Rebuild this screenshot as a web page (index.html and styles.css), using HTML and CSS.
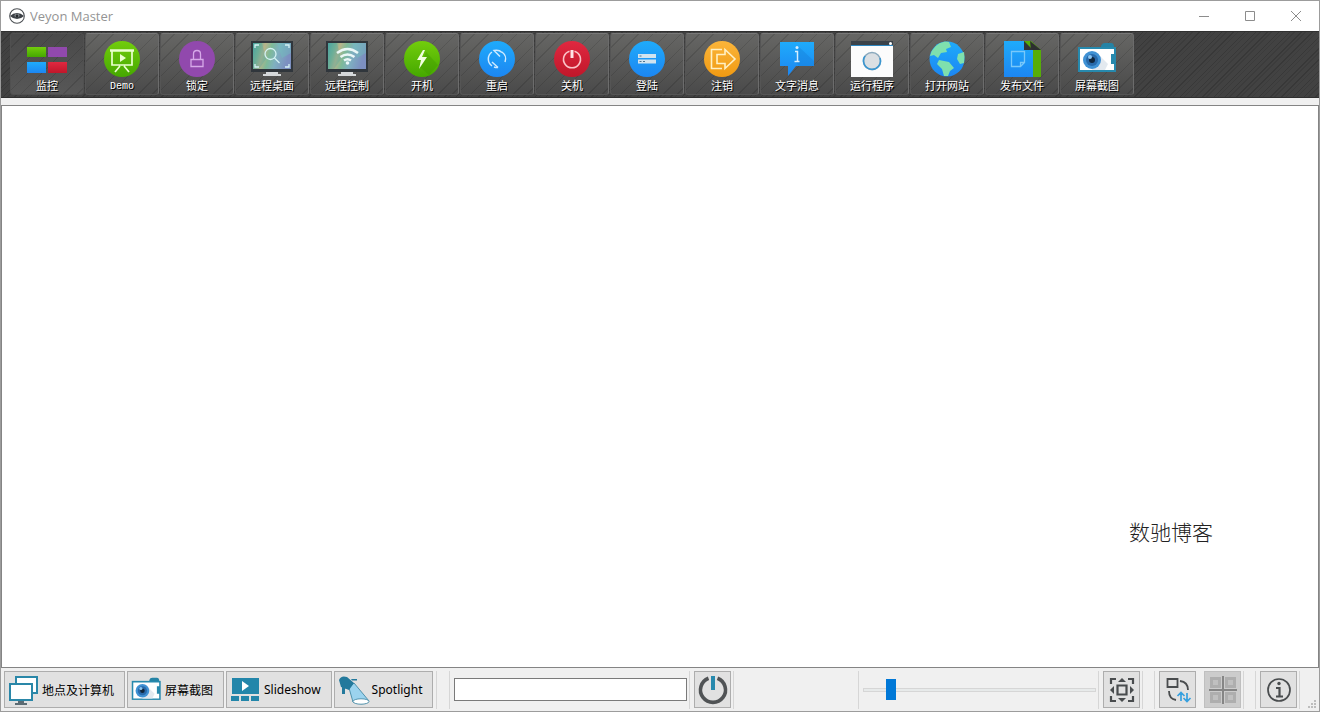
FILE: index.html
```html
<!DOCTYPE html>
<html lang="zh-CN">
<head>
  <meta charset="UTF-8">
  <meta name="viewport" content="width=device-width, initial-scale=1.0">
  <title>Veyon Master</title>
  <link rel="stylesheet" href="styles.css">
</head>
<body>
  <svg class="defs" width="0" height="0" aria-hidden="true">
    <defs>
      <linearGradient id="green" x1="0" y1="0" x2="0" y2="1"><stop offset="0" stop-color="#72cd0c"/><stop offset="1" stop-color="#45a800"/></linearGradient>
      <linearGradient id="blue" x1="0" y1="0" x2="0" y2="1"><stop offset="0" stop-color="#1fabfb"/><stop offset="1" stop-color="#1c86f2"/></linearGradient>
      <linearGradient id="red" x1="0" y1="0" x2="0" y2="1"><stop offset="0" stop-color="#e02840"/><stop offset="1" stop-color="#c0172a"/></linearGradient>
      <linearGradient id="orange" x1="0" y1="0" x2="0" y2="1"><stop offset="0" stop-color="#fbb53a"/><stop offset="1" stop-color="#f09a12"/></linearGradient>
      <linearGradient id="wallpaper" x1="0" y1="0" x2="1" y2="0.2"><stop offset="0" stop-color="#4aa3a0"/><stop offset=".2" stop-color="#7fb391"/><stop offset=".32" stop-color="#b9b48a"/><stop offset=".5" stop-color="#7dba98"/><stop offset=".7" stop-color="#7fb0c0"/><stop offset="1" stop-color="#7c8fc0"/></linearGradient>
      <symbol id="monitor" viewBox="0 0 42 40">
        <rect y="2" width="42" height="31" fill="#30363c"/>
        <rect x="2" y="4" width="38" height="26" fill="url(#wallpaper)"/>
        <path d="M2 4h9l4 16-7 10H2z" fill="#4aa5a4" opacity=".35"/>
        <path d="M26 4h14v10l-9 5z" fill="#6fc2bc" opacity=".4"/>
        <path d="M15 33h12v2h3v2H12v-2h3z" fill="#d5d8da"/>
      </symbol>
      <symbol id="camera" viewBox="0 0 40 40">
        <path d="M24 7q1-3 4-3h6q3 0 3 4v2H24z" fill="#2583a5"/>
        <rect x="1" y="8" width="38" height="25" fill="#2789ad"/>
        <path d="M3 10h34v5h-3v10h3v6H3z" fill="#fff"/>
        <path d="M19 13l12 12-3 6H15z" fill="#e3e9ef"/>
        <circle cx="15" cy="21" r="9" fill="#3f91d4"/>
        <circle cx="15" cy="21" r="6" fill="#2869aa"/>
        <circle cx="15" cy="21" r="3" fill="#10263c"/>
        <circle cx="13" cy="18" r="2" fill="#8cc5ef"/>
      </symbol>
    </defs>
  </svg>

  <div class="window">
    <header class="titlebar">
      <svg class="app-logo" viewBox="0 0 16 16" aria-hidden="true"><circle cx="8" cy="8" r="7.3" fill="#fff" stroke="#4c5054" stroke-width="1.1"/><path d="M1 8q3-3 7-3t7 3q-3 3-7 3T1 8z" fill="#3d4247"/><ellipse cx="8" cy="7.5" rx="2.6" ry="1.7" fill="#8b9095"/><circle cx="8" cy="8" r="1.4" fill="#25292c"/></svg>
      <h1>Veyon Master</h1>
      <div class="window-controls">
        <button type="button" aria-label="最小化"><svg viewBox="0 0 12 12"><path d="M1 6.500h10"/></svg></button>
        <button type="button" aria-label="最大化"><svg viewBox="0 0 12 12"><path d="M1.500 1.500h9v9h-9z"/></svg></button>
        <button type="button" aria-label="关闭"><svg viewBox="0 0 12 12"><path d="M1 1l10 10M11 1L1 11"/></svg></button>
      </div>
    </header>

    <nav class="toolbar">
      <button type="button" class="tool active">
        <svg viewBox="0 0 40 40"><path d="M0 8h19v10H0z" fill="url(#green)"/><path d="M21 8h19v10H21z" fill="#9149ad"/><path d="M0 23h19v11H0z" fill="url(#blue)"/><path d="M21 23h19v11H21z" fill="url(#red)"/></svg>
        <span>监控</span>
      </button>
      <button type="button" class="tool">
        <svg viewBox="0 0 40 40"><circle cx="20" cy="20" r="18" fill="url(#green)"/><g fill="none" stroke="#eaffcf" stroke-width="1.700"><path d="M8 11.500h24" stroke-width="2.500"/><path d="M10 12v14h20V12M18 27l-5 6M22 27l5 6"/></g><path d="M18 15l6 4-6 4z" fill="#eaffcf"/></svg>
        <span class="latin">Demo</span>
      </button>
      <button type="button" class="tool">
        <svg viewBox="0 0 40 40"><circle cx="20" cy="20" r="18" fill="#9149ad"/><path d="M14 20.500h12v7H14zM16.500 20v-5q0-3.500 3.500-3.500t3.500 3.500v5" fill="none" stroke="#d6a9e8" stroke-width="1.300"/></svg>
        <span>锁定</span>
      </button>
      <button type="button" class="tool">
        <svg class="wide" viewBox="0 0 42 40"><use href="#monitor"/><g fill="none" stroke="#d5f2f5" stroke-width="1.300"><circle cx="19.500" cy="15" r="5.500"/><path d="M23.500 19l5 5"/><path d="M4 9V6h4M34 6h4v3M4 25v3h4M34 28h4v-3"/></g></svg>
        <span>远程桌面</span>
      </button>
      <button type="button" class="tool">
        <svg class="wide" viewBox="0 0 42 40"><use href="#monitor"/><g fill="none" stroke="#eaf7f7" stroke-width="2.500"><path d="M11 14q10.500-8 21 0M14.500 18q7-5 14 0M18 21.500q3.500-2.500 7 0"/></g><circle cx="21.500" cy="24" r="1.800" fill="#eaf7f7"/></svg>
        <span>远程控制</span>
      </button>
      <button type="button" class="tool">
        <svg viewBox="0 0 40 40"><circle cx="20" cy="20" r="18" fill="url(#green)"/><path d="M24 13l12 13-9 10-9-8z" fill="#3d9500" opacity=".35"/><path d="M21 11l-6 10h4l-2 9 8-12h-5l3-7z" fill="#f1ffe0"/></svg>
        <span>开机</span>
      </button>
      <button type="button" class="tool">
        <svg viewBox="0 0 40 40"><circle cx="20" cy="20" r="18" fill="url(#blue)"/><g fill="none" stroke="#cfeaff" stroke-width="1.500"><path d="M15 27A8.500 8.500 0 0 1 15 13M25 13A8.500 8.500 0 0 1 28 23M21 28.500A8.500 8.500 0 0 1 17 28"/><path d="M23 17.500l-6-6q5-1 8 2M15 23l6 5.500"/></g></svg>
        <span>重启</span>
      </button>
      <button type="button" class="tool">
        <svg viewBox="0 0 40 40"><circle cx="20" cy="20" r="18" fill="url(#red)"/><path d="M17.500 12.200a8.500 8.500 0 1 0 5 0" fill="none" stroke="#fbc3c8" stroke-width="1.600"/><path d="M20 11v8" stroke="#fde4e6" stroke-width="3"/></svg>
        <span>关机</span>
      </button>
      <button type="button" class="tool">
        <svg viewBox="0 0 40 40"><circle cx="20" cy="20" r="18" fill="url(#blue)"/><path d="M11 15h18v4H11zM11 20.500h18v4H11z" fill="#d2e3ef"/><path d="M12.500 17h2M12.500 22.500h2M16 22.500h2" stroke="#4f7590"/></svg>
        <span>登陆</span>
      </button>
      <button type="button" class="tool">
        <svg viewBox="0 0 40 40"><circle cx="20" cy="20" r="18" fill="url(#orange)"/><path d="M20 10.500H9.500v19H20M20 24.500h-5v-9h8v-5l10 9.500-10 9.500v-5z" fill="none" stroke="#fff0c4" stroke-width="1.600"/></svg>
        <span>注销</span>
      </button>
      <button type="button" class="tool">
        <svg viewBox="0 0 40 40"><path d="M3 3h34v24H19l-8 10V27H3z" fill="url(#blue)"/><path d="M22 8l15 14v5H23l-5-4z" fill="#1578d0" opacity=".35"/><path d="M18 12.500h2.500V22M17.500 22.500h5" fill="none" stroke="#d7efff" stroke-width="1.500"/><circle cx="20" cy="8.500" r="1.500" fill="#d7efff"/></svg>
        <span>文字消息</span>
      </button>
      <button type="button" class="tool">
        <svg class="wide" viewBox="0 0 42 40"><path d="M0 2h42v5H0z" fill="#3b4249"/><path d="M0 7h42v31H0z" fill="#fcfcfc"/><path d="M0 6.500h42" stroke="#2e86c0"/><circle cx="39.500" cy="4.500" r="1.500" fill="#fff"/><circle cx="21" cy="22" r="8.500" fill="#dadfe3" stroke="#8aa9bd" stroke-width="1.500"/><path d="M14 17a8.500 8.500 0 1 0 15 2" fill="none" stroke="#3a96d0" stroke-width="1.600"/></svg>
        <span>运行程序</span>
      </button>
      <button type="button" class="tool">
        <svg viewBox="0 0 40 40"><circle cx="20" cy="20" r="17.500" fill="url(#blue)"/><g fill="#7fe0ae"><path d="M3 17Q6 5 18 2.500l4 .5 2 5-5 2 1 3-6 1-3 5-4-3z"/><path d="M12 21l10 2 5 6-4 3-2 5h-4l-2-7-5-5z"/><path d="M37 13l-6 2-1 5 3 5 4-1q1-6 0-11z"/></g></svg>
        <span>打开网站</span>
      </button>
      <button type="button" class="tool">
        <svg viewBox="0 0 40 40"><path d="M22 2h7l10 9v27H22z" fill="#57ad08"/><path d="M28 2l11 9H29z" fill="#2d2f30"/><path d="M2 2h20v9h9v27H2z" fill="url(#blue)"/><path d="M22 2l9 9h-9z" fill="#303336"/><path d="M9.500 12.500h13v11l-4 4h-9zM22.500 23.500h-4v4" fill="none" stroke="#79c8fa" stroke-width="1.300"/></svg>
        <span>发布文件</span>
      </button>
      <button type="button" class="tool">
        <svg viewBox="0 0 40 40"><use href="#camera"/></svg>
        <span>屏幕截图</span>
      </button>
    </nav>

    <main class="monitoring-view">
      <p class="signature">数驰博客</p>
    </main>

    <footer class="statusbar">
      <div class="panel-buttons">
        <button type="button" class="btn">
          <svg viewBox="0 0 32 32"><g fill="#fff" stroke="#2a87a8" stroke-width="2"><path d="M8 3h21v16H8z"/><path d="M2 10h22v16H2z"/></g><path d="M10 27h6v2h3v2H7v-2h3z" fill="#5b6b73"/></svg>
          <span>地点及计算机</span>
        </button>
        <button type="button" class="btn">
          <svg viewBox="0 0 42 40"><use href="#camera" width="40" height="40"/></svg>
          <span>屏幕截图</span>
        </button>
        <button type="button" class="btn">
          <svg viewBox="0 0 32 32"><path d="M2 4h27v16H2zM1 22h8v5H1zM11 22h8v5h-8zM21 22h8v5h-8z" fill="#2386aa"/><path d="M12 7l7 5-7 5z" fill="#fff"/></svg>
          <span>Slideshow</span>
        </button>
        <button type="button" class="btn">
          <svg viewBox="0 0 32 32"><path d="M11 14l5-5 15 18q-6 5-16 1z" fill="#9bd3ee" stroke="#347f9d" stroke-width=".8"/><ellipse cx="23" cy="27.500" rx="8" ry="2.700" fill="#fff" stroke="#347f9d" stroke-width=".8"/><path d="M1 6q2-5 8-3l7 6-5 7-8-3zM4 13h3v7H4zM13 5h6v1.500h-5z" fill="#23799c"/></svg>
          <span>Spotlight</span>
        </button>
      </div>
      <div class="group search">
        <input type="text" aria-label="搜索用户和计算机">
      </div>
      <div class="group">
        <button type="button" class="btn icon-btn" aria-label="仅显示已开机的计算机">
          <svg viewBox="0 0 32 32"><path d="M11.500 4.200a12.500 12.500 0 1 0 9 0" fill="none" stroke="#505355" stroke-width="3.600"/><path d="M14 2h4v14h-4z" fill="#2789ad"/></svg>
        </button>
      </div>
      <div class="group zoom">
        <input type="range" min="0" max="100" value="10" aria-label="缩放">
      </div>
      <div class="group">
        <button type="button" class="btn icon-btn" aria-label="自动调整大小">
          <svg viewBox="0 0 32 32"><g fill="none" stroke="#494c4e" stroke-width="2.200"><path d="M11.500 11.500h9v9h-9zM5 10V5h5M22 5h5v5M5 22v5h5M22 27h5v-5"/></g><path d="M16 4l4 4h-8zM16 28l-4-4h8zM4 16l4-4v8zM28 16l-4-4v8z" fill="#494c4e"/></svg>
        </button>
      </div>
      <div class="group pair">
        <button type="button" class="btn icon-btn" aria-label="自定义计算机位置">
          <svg viewBox="0 0 32 32"><path d="M5.500 5h10v8h-10zM18 7q8 1 8 9M7 17q0 8 7 9" fill="none" stroke="#494c4e" stroke-width="1.800"/><path d="M19 27v-8M15.500 22l3.500-3.500 3.500 3.500M25 19v8M21.500 24l3.500 3.500 3.500-3.500" fill="none" stroke="#36a0df" stroke-width="1.700"/></svg>
        </button>
        <button type="button" class="btn icon-btn pressed" aria-label="对齐到网格">
          <svg viewBox="0 0 32 32"><path d="M3 3h11v11H3zM18 3h11v11H18zM3 18h11v11H3zM18 18h11v11H18z" fill="#aeaeae"/><path d="M6 6h5v5H6zM21 6h5v5h-5zM6 21h5v5H6zM21 21h5v5h-5z" fill="#c0c0c0"/><path d="M16 2v28M2 16h28" stroke="#858585" stroke-width="2"/></svg>
        </button>
      </div>
      <div class="group about">
        <button type="button" class="btn icon-btn" aria-label="关于">
          <svg viewBox="0 0 32 32"><circle cx="16" cy="16" r="11" fill="none" stroke="#494c4e" stroke-width="1.700"/><path d="M13 14h3.500v8M13 22.500h7" fill="none" stroke="#494c4e" stroke-width="2.200"/><circle cx="16" cy="9.500" r="1.700" fill="#494c4e"/></svg>
        </button>
      </div>
      <svg class="grip" viewBox="0 0 8 8" aria-hidden="true"><path d="M6 0h2v2H6zM3 3h2v2H3zM6 3h2v2H6zM0 6h2v2H0zM3 6h2v2H3zM6 6h2v2H6z" fill="#bdbdbd"/></svg>
    </footer>
  </div>
</body>
</html>
```
FILE: styles.css
```css
* {
  box-sizing: border-box;
}
body {
  margin: 0;
  font-family: "Noto Sans", "Noto Sans CJK SC", sans-serif;
  font-size: 12px;
  color: #000;
}
button, input {
  font: inherit;
  margin: 0;
}
.defs {
  position: absolute;
}
.window {
  display: flex;
  flex-direction: column;
  min-height: 100vh;
  background: #f0f0f0;
  border: 1px solid #9c9c9c;
}

/* title bar */
.titlebar {
  display: flex;
  align-items: center;
  height: 30px;
  padding-left: 8px;
  background: #fff;
}
.app-logo {
  width: 16px;
  height: 16px;
}
.titlebar h1 {
  margin: 0 0 0 5px;
  font-family: "Open Sans", sans-serif;
  font-size: 13px;
  font-weight: 400;
  line-height: 18px;
  color: #949494;
}
.window-controls {
  display: flex;
  margin-left: auto;
}
.window-controls button {
  display: flex;
  align-items: center;
  justify-content: center;
  width: 46px;
  height: 28px;
  padding: 0;
  border: none;
  background: none;
}
.window-controls svg {
  width: 12px;
  height: 12px;
  fill: none;
  stroke: #8c8c8c;
}

/* main toolbar */
.toolbar {
  display: flex;
  gap: 1px;
  height: 67px;
  padding: 1px 9px 2px;
  border-top: 1px solid #303030;
  border-bottom: 1px solid #303030;
  background: repeating-linear-gradient(135deg, #424242 0 2px, #3c3c3c 2px 3px, #424242 3px 7px, #383838 7px 8px);
}
.tool {
  display: flex;
  flex-direction: column;
  align-items: center;
  width: 74px;
  padding: 5px 0 0;
  border: 1px solid #555;
  border-top-color: #777;
  border-right-color: #6c6c6c;
  border-radius: 3px;
  background:
    repeating-linear-gradient(135deg, transparent 0 9px, rgba(0, 0, 0, 0.12) 9px 10px),
    linear-gradient(#666664, #4a4a4a);
  color: #fff;
  font-size: 11px;
  line-height: 14px;
  text-shadow: 1px 1px 0 #000;
}
.tool.active {
  border-color: #505050;
  background:
    repeating-linear-gradient(135deg, transparent 0 9px, rgba(0, 0, 0, 0.12) 9px 10px),
    linear-gradient(#4a4a4a, #575757);
}
.tool svg {
  flex: none;
  width: 40px;
  height: 40px;
}
.tool svg.wide {
  width: 42px;
}
.tool .latin {
  font-family: "Liberation Mono", monospace;
  font-size: 10px;
  line-height: 16px;
}

/* computer monitoring area */
.monitoring-view {
  display: flex;
  flex: 1;
  align-items: flex-end;
  justify-content: flex-end;
  margin-top: 7px;
  padding: 0 105px 122px;
  border: 1px solid #848484;
  background: #fff;
}
.signature {
  margin: 0;
  font-family: "Noto Sans CJK SC", sans-serif;
  font-size: 21px;
  font-weight: 300;
  line-height: 28px;
  color: #222;
}

/* status bar */
.statusbar {
  display: flex;
  align-items: center;
  height: 43px;
  padding: 0 3px;
}
.panel-buttons {
  display: flex;
  align-items: center;
  gap: 2px;
  height: 38px;
  padding-right: 3px;
  border-right: 1px solid #d6d6d6;
}
.btn {
  display: flex;
  align-items: center;
  gap: 2px;
  height: 37px;
  padding: 0 10px 0 3px;
  border: 1px solid #adadad;
  background: #e1e1e1;
  color: #000;
  white-space: nowrap;
}
.btn svg {
  flex: none;
  width: 32px;
  height: 32px;
}
.icon-btn {
  justify-content: center;
  width: 37px;
  padding: 0;
}
.icon-btn.pressed {
  border-color: #bfbfbf;
  background: #ccc;
}
.group {
  display: flex;
  align-items: center;
  height: 38px;
  margin-right: 11px;
  padding: 0 2px 0 4px;
  border-left: 1px solid #d6d6d6;
  border-right: 1px solid #d6d6d6;
}
.group.pair {
  gap: 8px;
}
.group.about {
  margin-right: 8px;
}
.group.search {
  margin: 0 0 0 12px;
}
.search + .group {
  margin-right: auto;
  border-left: none;
}
.search input {
  width: 233px;
  height: 23px;
  padding: 0 4px;
  border: 1px solid #7a7a7a;
  background: #fff;
}
.group.zoom {
  margin-right: 0;
}
.zoom + .group {
  border-left: none;
}
.zoom input {
  width: 233px;
  height: 22px;
  appearance: none;
  background: none;
}
.zoom input::-webkit-slider-runnable-track {
  height: 4px;
  border: 1px solid #d6d6d6;
  background: #e7eaea;
}
.zoom input::-webkit-slider-thumb {
  appearance: none;
  width: 10px;
  height: 21px;
  margin-top: -10px;
  background: #0078d7;
}
.grip {
  align-self: flex-end;
  width: 8px;
  height: 8px;
  margin-bottom: 3px;
}
```
